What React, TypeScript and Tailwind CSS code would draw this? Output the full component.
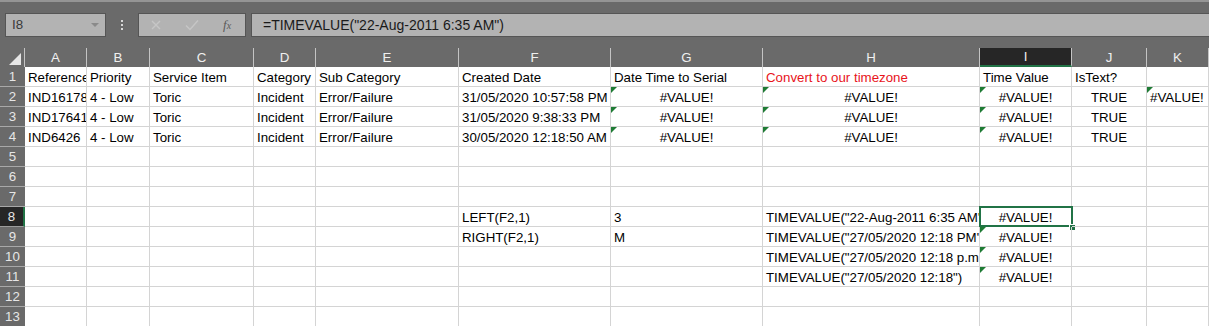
import React from "react";

type Cell = {
  v?: string;
  align?: "l" | "c";
  tri?: boolean;
  red?: boolean;
};

const cols = ["A", "B", "C", "D", "E", "F", "G", "H", "I", "J", "K"];
const widths = [
  "w-[62px]",
  "w-[63px]",
  "w-[104px]",
  "w-[62px]",
  "w-[143px]",
  "w-[152px]",
  "w-[152px]",
  "w-[217px]",
  "w-[92px]",
  "w-[75px]",
  "w-[62px]",
];

const err = (tri = true): Cell => ({ v: "#VALUE!", align: "c", tri });

const row = (...cells: Cell[]) => {
  const r: Cell[] = [];
  for (let i = 0; i < 11; i++) r.push(cells[i] || {});
  return r;
};
const t = (v: string): Cell => ({ v });

const data: Cell[][] = [
  row(
    t("Reference"),
    t("Priority"),
    t("Service Item"),
    t("Category"),
    t("Sub Category"),
    t("Created Date"),
    t("Date Time to Serial"),
    { v: "Convert to our timezone", red: true },
    t("Time Value"),
    t("IsText?")
  ),
  row(
    t("IND16178"),
    t("4 - Low"),
    t("Toric"),
    t("Incident"),
    t("Error/Failure"),
    t("31/05/2020 10:57:58 PM"),
    err(),
    err(),
    err(),
    { v: "TRUE", align: "c" },
    { v: "#VALUE!", tri: true }
  ),
  row(
    t("IND17641"),
    t("4 - Low"),
    t("Toric"),
    t("Incident"),
    t("Error/Failure"),
    t("31/05/2020 9:38:33 PM"),
    err(),
    err(),
    err(),
    { v: "TRUE", align: "c" }
  ),
  row(
    t("IND6426"),
    t("4 - Low"),
    t("Toric"),
    t("Incident"),
    t("Error/Failure"),
    t("30/05/2020 12:18:50 AM"),
    err(),
    err(),
    err(),
    { v: "TRUE", align: "c" }
  ),
  row(),
  row(),
  row(),
  row({}, {}, {}, {}, {}, t("LEFT(F2,1)"), t("3"), t('TIMEVALUE("22-Aug-2011 6:35 AM")'), err(false)),
  row({}, {}, {}, {}, {}, t("RIGHT(F2,1)"), t("M"), t('TIMEVALUE("27/05/2020 12:18 PM")'), err()),
  row({}, {}, {}, {}, {}, {}, {}, t('TIMEVALUE("27/05/2020 12:18 p.m.")'), err()),
  row({}, {}, {}, {}, {}, {}, {}, t('TIMEVALUE("27/05/2020 12:18")'), err()),
  row(),
  row(),
];

const Triangle = () => (
  <span className="absolute left-0 top-0 w-0 h-0 border-t-[6px] border-r-[6px] border-t-[#1e7b34] border-r-transparent" />
);

export default function App() {
  return (
    <div className="w-[1209px] h-[326px] overflow-hidden bg-white font-['Liberation_Sans',Arial,sans-serif] text-[13.3px] text-black">
      {/* formula bar */}
      <div className="h-[48px] bg-[#6a6a6a] border-t-2 border-[#959595] pt-[11px] flex items-start">
        <div className="ml-[5px] w-[101px] h-[24px] bg-[#b3b3b3] border border-[#555] flex items-center justify-between pl-[6px] pr-[6px] text-[#3a3a3a]">
          <span>I8</span>
          <span className="w-0 h-0 border-l-[4px] border-r-[4px] border-t-[4px] border-l-transparent border-r-transparent border-t-[#8a8a8a]" />
        </div>
        <div className="w-[32px] h-[24px] flex flex-col items-center justify-center gap-[2px]">
          <span className="w-[2px] h-[2px] bg-[#d8d8d8]" />
          <span className="w-[2px] h-[2px] bg-[#d8d8d8]" />
          <span className="w-[2px] h-[2px] bg-[#d8d8d8]" />
        </div>
        <div className="w-[108px] h-[24px] bg-[#b3b3b3] border border-[#555] flex items-center pl-[11px]">
          <svg width="12" height="12" viewBox="0 0 12 12">
            <path d="M2 2L10 10M10 2L2 10" stroke="#c6c6c6" strokeWidth="1.4" />
          </svg>
          <svg width="14" height="12" viewBox="0 0 14 12" className="ml-[23px]">
            <path d="M1 6.5L5 10.5L13 1.5" stroke="#c6c6c6" strokeWidth="1.4" fill="none" />
          </svg>
          <span className="ml-[24px] font-['Liberation_Serif',serif] italic text-[13px] text-[#5a5a5a]">
            f<span className="text-[10px]">x</span>
          </span>
        </div>
        <div className="ml-[5px] flex-1 h-[24px] bg-[#b3b3b3] border-y border-l border-[#555] flex items-center pl-[11px] text-[14px] text-[#1a1a1a]">
          =TIMEVALUE("22-Aug-2011 6:35 AM")
        </div>
      </div>

      {/* column headers */}
      <div className="flex h-[19px] bg-[#6a6a6a] text-[#f0f0f0]">
        <div className="w-[25px] h-full border-r border-[#c4c4c4] flex items-end justify-end pr-[3px] pb-[2px]">
          <span className="w-0 h-0 border-l-[12px] border-b-[12px] border-l-transparent border-b-[#e6e6e6]" />
        </div>
        {cols.map((c, i) => (
          <div
            key={c}
            className={`${widths[i]} h-full flex items-center justify-center ${
              c === "I"
                ? "bg-[#262626] border-b-2 border-b-[#217346] border-r border-r-[#c4c4c4]"
                : "border-r border-[#c4c4c4]"
            }`}
          >
            {c}
          </div>
        ))}
      </div>

      {/* rows */}
      {data.map((r, ri) => {
        const n = ri + 1;
        return (
          <div key={n} className="flex h-[20px]">
            <div
              className={`w-[25px] h-full flex items-center justify-center border-b text-[#e6e6e6] ${
                n === 8
                  ? "bg-[#262626] border-b-[#9c9c9c] border-r-2 border-r-[#217346]"
                  : "bg-[#6a6a6a] border-b-[#a8a8a8]"
              }`}
            >
              {n}
            </div>
            {r.map((c, ci) => {
              const sel = n === 8 && ci === 8;
              return (
                <div
                  key={ci}
                  className={`${widths[ci]} relative h-full border-r border-b border-[#d4d4d4] flex items-center whitespace-nowrap ${
                    c.align === "c" ? "justify-center" : "pl-[3px] overflow-hidden"
                  } ${c.red ? "text-[#e8141b]" : ""} ${ci === 10 ? "overflow-visible" : ""}`}
                >
                  {c.tri && <Triangle />}
                  <span className="pt-[2px]">{c.v}</span>
                  {sel && (
                    <>
                      <span className="absolute left-[-1px] top-[-1px] right-[-2px] bottom-[-1px] border-2 border-[#217346]" />
                      <span className="absolute right-[-5px] bottom-[-5px] w-[7px] h-[7px] bg-[#217346] border border-white" />
                    </>
                  )}
                </div>
              );
            })}
          </div>
        );
      })}
    </div>
  );
}
